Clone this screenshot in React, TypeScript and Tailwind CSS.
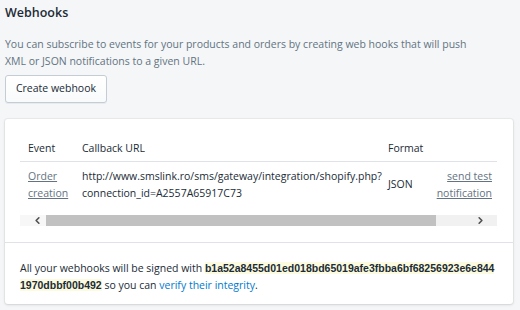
import { ChevronLeft, ChevronRight } from "lucide-react";

const font = { fontFamily: '"Open Sans", "Noto Sans", Arial, sans-serif' };
const hashFont = { fontFamily: '"Liberation Sans", Arial, sans-serif' };

const App = () => {
  return (
    <div
      className="w-[520px] h-[310px] overflow-hidden bg-[#f4f6f8] px-[5px] text-[10.5px] text-[#212b36] antialiased"
      style={font}
    >
      <h2 className="pt-[4px] text-[12.5px] leading-[18px] font-semibold text-[#212b36]">Webhooks</h2>

      <p className="mt-[14px] max-w-[470px] leading-[17px] text-[#637381]">
        You can subscribe to events for your products and orders by creating web hooks that will push
        XML or JSON notifications to a given URL.
      </p>

      <button className="mt-[5px] h-[28px] w-[102px] rounded-[3px] border border-[#c4cdd5] bg-gradient-to-b from-white to-[#f9fafb] text-[10.5px] text-[#212b36] shadow-[0_1px_0_rgba(22,29,37,0.05)]">
        Create webhook
      </button>

      <section className="mt-[16px] w-[508px] rounded-[3px] bg-white shadow-[0_0_0_1px_rgba(63,63,68,0.05),0_1px_3px_rgba(63,63,68,0.15)]">
        <div className="pl-[15px] pr-[16px] pt-[21px] pb-[16px]">
          <table className="w-[477px] table-fixed border-collapse text-left">
            <colgroup>
              <col className="w-[54px]" />
              <col className="w-[306px]" />
              <col className="w-[48px]" />
              <col className="w-[69px]" />
            </colgroup>
            <thead>
              <tr className="border-b border-[#dfe3e8]">
                <th className="pl-[8px] pb-[4px] leading-[17px] font-normal">Event</th>
                <th className="pl-[8px] pb-[4px] leading-[17px] font-normal">Callback URL</th>
                <th className="pl-[8px] pb-[4px] leading-[17px] font-normal">Format</th>
                <th />
              </tr>
            </thead>
            <tbody>
              <tr>
                <td className="pl-[8px] pt-[6px] pb-[5px] align-middle leading-[17px]">
                  <a className="text-[#637381] underline">Order creation</a>
                </td>
                <td className="pl-[8px] pt-[6px] pb-[5px] leading-[17px] whitespace-nowrap">
                  http://www.smslink.ro/sms/gateway/integration/shopify.php?
                  <br />
                  connection_id=A2557A65917C73
                </td>
                <td className="pl-[8px] pt-[6px] pb-[5px] align-middle">JSON</td>
                <td className="pr-[5px] pt-[6px] pb-[5px] text-right leading-[17px] align-middle">
                  <a className="text-[#637381] underline">send test notification</a>
                </td>
              </tr>
            </tbody>
          </table>

          <div className="mt-[8px] flex h-[11px] w-[477px] items-center bg-[#f1f1f1]">
            <div className="flex h-[11px] w-[26px] items-center bg-[#f7f7f7] pl-[12px]">
              <ChevronLeft className="h-[11px] w-[11px] text-[#505050]" strokeWidth={3.5} />
            </div>
            <div className="h-[11px] w-[390px] bg-[#c1c1c1]" />
            <div className="flex flex-1 items-center justify-end pr-[11px]">
              <ChevronRight className="h-[11px] w-[11px] text-[#505050]" strokeWidth={3.5} />
            </div>
          </div>
        </div>

        <div className="border-t border-[#dfe3e8] px-[15px] pt-[17px] pb-[10px] leading-[17px]">
          All your webhooks will be signed with{" "}
          <span className="break-all bg-[#fcfbe0] font-bold" style={hashFont}>
            b1a52a8455d01ed018bd65019afe3fbba6bf68256923e6e8441970dbbf00b492
          </span>{" "}
          so you can <a className="text-[#007ace]">verify their integrity</a>.
        </div>
      </section>
    </div>
  );
};

export default App;
